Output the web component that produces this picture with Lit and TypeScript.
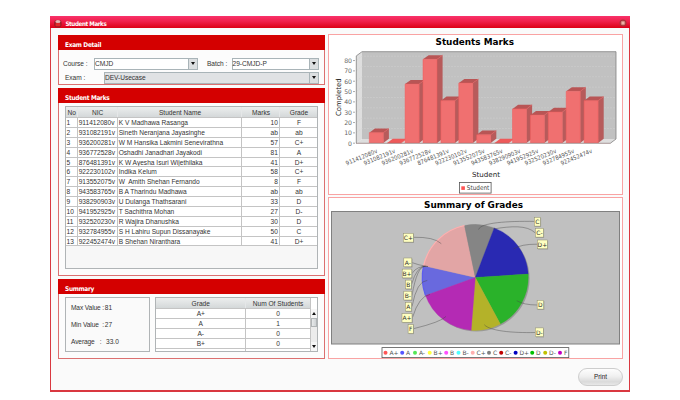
import { LitElement, html, svg, css } from "lit";
import { customElement } from "lit/decorators.js";

type Row = [string, string, string, string];

const STUDENTS: Row[] = [
  ["911412080v", "K V Madhawa Rasanga", "10", "F"],
  ["931082191v", "Sineth Neranjana Jayasinghe", "ab", "ab"],
  ["936200281v", "W M Hansika Lakmini Senevirathna", "57", "C+"],
  ["936772528v", "Oshadhi Janadhari Jayakodi", "81", "A"],
  ["876481391v", "K W Ayesha Isuri Wijethilaka", "41", "D+"],
  ["922230102v", "Indika Kelum", "58", "C+"],
  ["913552075v", "W  Amith Shehan Fernando", "8", "F"],
  ["943583765v", "B A Tharindu Madhawa", "ab", "ab"],
  ["938290903v", "U Dulanga Thathsarani", "33", "D"],
  ["941952925v", "T Sachithra Mohan", "27", "D-"],
  ["932520230v", "R Wajira Dhanushka", "30", "D"],
  ["932784955v", "S H Lahiru Supun Dissanayake", "50", "C"],
  ["922452474v", "B Shehan Niranthara", "41", "D+"],
];

@customElement("marks-chart")
export class MarksChart extends LitElement {
  static styles = css`
    :host { display: block; }
    svg { display: block; font-family: "DejaVu Sans", "Noto Sans", sans-serif; }
    .title { font-weight: bold; font-size: 9.5px; fill: #000; }
    .tick { font-size: 6.2px; fill: #666; text-anchor: end; }
    .cat { font-size: 6px; fill: #555; text-anchor: end; }
    .axis { font-size: 7px; fill: #222; }
    .key { font-size: 6.5px; fill: #444; }
  `;
  // Drawn in window coordinates: the view box starts at the panel's inner corner.
  render() {
    const base = 143;
    const unit = 1.033;
    const dx = 5.6;
    const dy = 4.2;
    const ticks = [0, 10, 20, 30, 40, 50, 60, 70, 80];
    return html`<svg width="293" height="159" viewBox="329 35 293 159">
      <text class="title" x="435.5" y="45.2" textLength="78.5" lengthAdjust="spacingAndGlyphs">Students Marks</text>
      <path d="M362 51.7H616V139H362Z" fill="#c1c1c1" />
      <path d="M356.3 55.9L362 51.7V139L356.3 143.2Z" fill="#dedede" />
      <path d="M356.3 143.2L362 139H616L610.4 143.2Z" fill="#dedede" />
      ${ticks.slice(1).map(
        (t) => svg`<path d="M356.3 ${base - t * unit}l5.7 -4.2H616" fill="none" stroke="#d0d0d0" stroke-width=".5" stroke-dasharray="2 1"/>`
      )}
      <path d="M356.3 143.2V55.9L362 51.7H616V139L610.4 143.2" fill="none" stroke="#808080" stroke-width=".8" />
      ${ticks.map(
        (t) => svg`<text class="tick" x="352" y="${base - t * unit + 2.5}">${t}</text>
          <path d="M353 ${base - t * unit + 0.2}h2" stroke="#888" stroke-width=".7"/>`
      )}
      ${STUDENTS.map((s, i) => {
        const v = Number(s[2]) || 0;
        const x = 369.3 + i * 17.9;
        const h = v * unit;
        const y = base - h;
        return svg`
          <path d="M${x} ${y}l${dx} ${-dy}h14l${-dx} ${dy}z" fill="${v ? "#b85555" : "#ee5a5a"}"/>
          <path d="M${x + 14} ${y}l${dx} ${-dy}v${h}l${-dx} ${dy}z" fill="#b75b5b"/>
          <rect x="${x}" y="${y}" width="14" height="${h}" fill="#f07070"/>
          <path d="M${x} ${base}V${y}h14V${base}M${x + 14} ${y}l${dx} ${-dy}" fill="none" stroke="#f25b5b" stroke-width=".5"/>`;
      })}
      <path d="M356 143.3H610.5" stroke="#8a7070" stroke-width=".7" />
      ${STUDENTS.map((s, i) => {
        const x = 377.8 + i * 17.9;
        return svg`<text class="cat" textLength="33.5" lengthAdjust="spacingAndGlyphs" x="${x}" y="152.6" transform="rotate(-22.5 ${x} 152.6)">${s[0]}</text>`;
      })}
      <text class="axis" transform="translate(341.2 116) rotate(-90)" textLength="37.5" lengthAdjust="spacingAndGlyphs">Completed</text>
      <text class="axis" x="472" y="177.3" textLength="28" lengthAdjust="spacingAndGlyphs">Student</text>
      <rect x="459.5" y="182.5" width="31.6" height="10.6" fill="#fff" stroke="#555" stroke-width=".8" />
      <rect x="461.3" y="186.3" width="3.6" height="3.6" fill="#ff5555" />
      <text class="key" x="466.8" y="190.4" textLength="22.5" lengthAdjust="spacingAndGlyphs">Student</text>
    </svg>`;
  }
}

@customElement("grade-chart")
export class GradeChart extends LitElement {
  static styles = css`
    :host { display: block; }
    svg { display: block; font-family: "DejaVu Sans", "Noto Sans", sans-serif; }
    .title { font-weight: bold; font-size: 9.5px; fill: #000; }
    .tag { font-size: 6px; fill: #333; text-anchor: middle; }
    .key { font-size: 6px; fill: #555; }
  `;
  render() {
    const cx = 475.3;
    const cy = 277.4;
    const r = 53;
    const pt = (a: number) =>
      `${cx + r * Math.cos((a * Math.PI) / 180)} ${cy - r * Math.sin((a * Math.PI) / 180)}`;
    const slices: [number, number, string][] = [
      [200, 167.3, "#6969de"],
      [167.3, 101.8, "#e2a5a5"],
      [101.8, 69.1, "#858585"],
      [69.1, 3.6, "#2929b2"],
      [3.6, -61.8, "#2ab22a"],
      [-61.8, -94.5, "#b4b229"],
      [-94.5, -160, "#b42ab4"],
    ];
    // label, centre x, centre y, box width
    const tags: [string, number, number, number][] = [
      ["C+", 408.3, 237.7, 10], ["A-", 407.8, 262.4, 8], ["B+", 407, 273.5, 9.6],
      ["B", 408.4, 284.5, 5.8], ["B-", 407.8, 295.6, 8], ["A", 408.4, 306.7, 6],
      ["A+", 407, 318, 10], ["F", 410.7, 329, 5.2],
      ["C", 537.4, 221.7, 6], ["C-", 539.4, 232.7, 8], ["D+", 542.4, 244.4, 10],
      ["D", 540.4, 304.7, 6.5], ["D-", 539.3, 332.3, 8],
    ];
    const links = [
      "M413.5 237.3Q434 236.8 441.3 243.7", "M412 262.6Q418 265 428 266.6",
      "M412 273.5Q417 265.5 428 266.4", "M411.5 284.5Q417 265.5 426 266.2",
      "M412 295.5Q417 266.5 425 266.2", "M412 306.5Q417 280.5 427.3 280.4",
      "M412.5 317.5Q419 296 430 294.4", "M413.5 328.7Q441 322 446 316.4",
      "M534.3 221.4C508 221 481 222.5 478.5 229.5", "M535 232.7C527 225 511 226 493.5 229",
      "M537.3 244.2Q521 244 513.5 249", "M537 305Q524 305 516.7 300.7",
      "M535 332.5C512 333 490 331 484.3 324.7",
    ];
    const keys: [string, number, string][] = [
      ["A+", 385.5, "#ff5555"], ["A", 402.2, "#5555ff"], ["A-", 415, "#55e655"],
      ["B+", 429.7, "#ffff40"], ["B", 446.2, "#ff50ff"], ["B-", 458.5, "#50ffff"],
      ["C+", 472.7, "#ffafaf"], ["C", 489, "#808080"], ["C-", 501.2, "#c00000"],
      ["D+", 515.6, "#0000c0"], ["D", 532.2, "#00c000"], ["D-", 545.2, "#c0c000"],
      ["F", 560, "#c000c0"],
    ];
    return html`<svg width="293" height="160" viewBox="329 198 293 160">
      <text class="title" x="424" y="208.2" textLength="99" lengthAdjust="spacingAndGlyphs">Summary of Grades</text>
      <rect x="331.5" y="211.5" width="288" height="132.5" fill="#c0c0c0" stroke="#808080" />
      <circle cx="${cx + 1.3}" cy="${cy + 1.2}" r="53" fill="#999" />
      ${slices.map(
        ([a, b, c]) => svg`<path d="M${cx} ${cy}L${pt(a)}A${r} ${r} 0 0 1 ${pt(b)}Z" fill="${c}" stroke="${c}" stroke-width=".3"/>`
      )}
      <path d="M${pt(200)}A53 53 0 0 1 ${pt(167.3)}" fill="none" stroke="#5c5cf0" stroke-width="1.2" />
      <path d="M${pt(167.3)}A53 53 0 0 1 ${pt(101.8)}" fill="none" stroke="#ffb0b0" stroke-width="1.2" />
      ${links.map((d) => svg`<path d="${d}" fill="none" stroke="#444" stroke-opacity=".7" stroke-width=".6"/>`)}
      ${tags.map(
        ([t, x, y, w]) => svg`
          <rect x="${x - w / 2 + 0.7}" y="${y - 3.7}" width="${w}" height="8.8" fill="#999"/>
          <rect x="${x - w / 2}" y="${y - 4.4}" width="${w}" height="8.8" fill="#ffffc0" stroke="#8a8a70" stroke-width=".5"/>
          <text class="tag" x="${x}" y="${y + 2.2}">${t}</text>`
      )}
      <rect x="382" y="347.6" width="186.8" height="10" fill="#fff" stroke="#555" stroke-width=".8" />
      ${keys.map(
        ([t, x, c]) => svg`<circle cx="${x}" cy="352.7" r="2" fill="${c}"/>
          <text class="key" x="${x + 3.9}" y="355">${t}</text>`
      )}
    </svg>`;
  }
}

@customElement("app-root")
export class AppRoot extends LitElement {
  static styles = css`
    :host {
      display: block; width: 680px; height: 400px; overflow: hidden; background: #fff;
      font: 6.6px/8px "Liberation Sans", Arial, sans-serif; color: #333;
    }
    * { box-sizing: border-box; }
    .window {
      margin-left: 50px; width: 580px; height: 392px; padding-top: 16px;
      display: flex; flex-direction: column;
    }
    .bar {
      height: 12px; flex: none; display: flex; align-items: center; padding: 2px 3.5px 0 4px;
      background: linear-gradient(#f9326b, #f0204a 45%, #dc0015);
      color: #fff; font: bold 6.2px/9px "DejaVu Sans Condensed", "DejaVu Sans", sans-serif;
    }
    .bar span { flex: 1; padding-left: 3.5px; letter-spacing: -.4px; }
    .bar svg { display: block; }
    .body {
      flex: 1; display: flex; flex-direction: column; background: #fafafa;
      border: 1.5px solid #d93840; border-width: 0 1.5px 2px; padding: 6px 6px 0 7px;
    }
    .cols { display: flex; gap: 3px; height: 325px; }
    .left { width: 267px; padding-top: 1px; display: flex; flex-direction: column; gap: 3px; }
    .right { width: 295px; display: flex; flex-direction: column; gap: 2px; }
    .panel { border: 1px solid #dc7070; background: #fcfcfc; }
    .panel h2 {
      margin: -1px -1px 0; height: 15px; padding: 6px 0 0 7px; background: #d40000; color: #fff;
      font: bold 6.5px/9px "DejaVu Sans Condensed", "DejaVu Sans", sans-serif; letter-spacing: -.3px;
    }
    .exam { height: 50px; }
    .marks { height: 188px; }
    .summary { height: 80px; }
    .field { display: flex; align-items: center; padding-left: 4px; height: 11.5px; }
    .field.first { margin-top: 8px; }
    .field.second { margin-top: 2.5px; padding-left: 6px; }
    .lb { flex: none; letter-spacing: -.05px; }
    .lb.c1 { width: 31px; }
    .lb.c2 { width: 24.5px; margin-left: 9px; }
    .lb.c3 { width: 39px; }
    .select {
      flex: none; display: flex; height: 11.5px; border: 1px solid #a9b4b8; background: #fff; line-height: 10.5px;
    }
    .select b { font-weight: normal; flex: 1; }
    .select i { width: 9px; background: #dcdfe1; border-left: 1px solid #a9b4b8; display: grid; place-items: center; }
    .select i::after, .down::after { content: ""; border: 2.5px solid transparent; border-top: 3px solid #111; border-bottom: 0; }
    .course { width: 104px; }
    .batch { width: 87px; }
    .exams { width: 214.5px; background: #e0e2e4; }
    .exams b { letter-spacing: -.05px; }
    .frame { border: 1px solid #b0b4b6; background: #f7f7f7; }
    .marks .frame { margin: 3px 6px 0 5.5px; height: 163px; }
    .row { display: grid; height: 9.88px; line-height: 9.6px; background: #fff; border-bottom: 1px solid #c4c4c4; }
    .marks .row { grid-template-columns: 12.2px 40px 124.6px 37.6px 1fr; }
    .row > span { border-right: 1px solid #c4c4c4; padding-left: 1px; white-space: pre; overflow: hidden; }
    .row > span:last-child { border-right: 0; }
    .row .c { text-align: center; }
    .row .r { text-align: right; padding-right: 1px; }
    .row.head { height: 11px; line-height: 12px; background: linear-gradient(#eceeee, #d4d8d9); text-align: center; }
    .row.head > span { border-color: #e5e7e8; }
    .boxes { display: flex; padding: 3px 6px 0 5.5px; gap: 5.5px; }
    .stats { width: 85px; height: 54.5px; padding: 5.5px 0 0 5.5px; display: flex; flex-direction: column; gap: 9px; white-space: pre; background: #fafafa; }
    .stat { display: flex; }
    .stat span { width: 33.8px; letter-spacing: -.12px; }
    .stat.wide span { width: 35px; }
    .grades { flex: 1; height: 54.5px; display: flex; overflow: hidden; background: #fff; }
    .list { width: 154.5px; height: 52.5px; overflow: hidden; }
    .list .row { grid-template-columns: 89.5px 1fr; }
    .list .row > span:last-child { border-right: 1px solid #c4c4c4; }
    .scroll { flex: 1; margin-top: 10.5px; background: #ececec; display: flex; flex-direction: column; align-items: center; }
    .up, .down { height: 9px; width: 100%; background: #f6f6f6; display: grid; place-items: center; }
    .up::after { content: ""; border: 2.5px solid transparent; border-bottom: 3px solid #111; border-top: 0; }
    .thumb { width: 100%; height: 9px; background: linear-gradient(90deg, #e8eaeb, #cfd3d5); border: 1px solid #b0b4b6; margin-bottom: auto; }
    .chart { border: 1px solid #f9a3a3; background: #fff; }
    .chart.a { height: 161px; }
    .chart.b { height: 162px; }
    .print {
      align-self: flex-end; margin: 9px 0 0; width: 45px; height: 18px; border-radius: 9px;
      border: 1px solid #cdcdcd; background: linear-gradient(#fdfdfd, #f0f0f0 45%, #dadada 80%, #e8e8e8);
      font: 6.3px/8px "Liberation Sans", Arial, sans-serif; color: #222; padding: 0; text-align: center;
    }
  `;

  private gradeRow(g: string, n: string) {
    return html`<div class="row"><span class="c">${g}</span><span class="c">${n}</span></div>`;
  }

  render() {
    return html`<div class="window">
      <div class="bar">
        <svg width="8" height="9" viewBox="0 0 8 9">
          <rect x=".2" y="1" width="7.4" height="7.6" rx="3" fill="#9a1a26" />
          <ellipse cx="3.9" cy="2.4" rx="2.6" ry="1.5" fill="#e6b4b4" />
          <rect x="1.5" y="4" width="4.8" height="3.2" rx="1" fill="#e02a2a" />
        </svg>
        <span>Student Marks</span>
        <svg width="8" height="8" viewBox="0 0 8 8">
          <circle cx="4" cy="4" r="3.5" fill="#a8343a" />
          <circle cx="4" cy="4" r="2.3" fill="#d88a80" />
          <path d="M3 3l2 2M5 3L3 5" stroke="#f4c4b8" stroke-width=".7" />
        </svg>
      </div>
      <div class="body">
        <div class="cols">
          <div class="left">
            <div class="panel exam">
              <h2>Exam Detail</h2>
              <div class="field first">
                <span class="lb c1">Course :</span>
                <div class="select course"><b>CMJD</b><i></i></div>
                <span class="lb c2">Batch :</span>
                <div class="select batch"><b>29-CMJD-P</b><i></i></div>
              </div>
              <div class="field second">
                <span class="lb c3">Exam :</span>
                <div class="select exams"><b>DEV-Usecase</b><i></i></div>
              </div>
            </div>
            <div class="panel marks">
              <h2>Student Marks</h2>
              <div class="frame">
                <div class="row head">
                  <span>No</span><span>NIC</span><span>Student Name</span><span>Marks</span><span>Grade</span>
                </div>
                ${STUDENTS.map(
                  (s, i) => html`<div class="row">
                    <span>${i + 1}</span><span>${s[0]}</span><span>${s[1]}</span><span class="r">${s[2]}</span><span class="c">${s[3]}</span>
                  </div>`
                )}
              </div>
            </div>
            <div class="panel summary">
              <h2>Summary</h2>
              <div class="boxes">
                <div class="frame stats">
                  <div class="stat"><span>Max Value :</span>81</div>
                  <div class="stat"><span>Min Value  :</span>27</div>
                  <div class="stat wide"><span>Average   :</span>33.0</div>
                </div>
                <div class="frame grades">
                  <div class="list">
                    <div class="row head"><span>Grade</span><span>Num Of Students</span></div>
                    ${this.gradeRow("A+", "0")}${this.gradeRow("A", "1")}${this.gradeRow("A-", "0")}
                    ${this.gradeRow("B+", "0")}${this.gradeRow("B", "0")}
                  </div>
                  <div class="scroll"><div class="up"></div><div class="thumb"></div><div class="down"></div></div>
                </div>
              </div>
            </div>
          </div>
          <div class="right">
            <div class="chart a"><marks-chart></marks-chart></div>
            <div class="chart b"><grade-chart></grade-chart></div>
          </div>
        </div>
        <button class="print">Print</button>
      </div>
    </div>`;
  }
}
